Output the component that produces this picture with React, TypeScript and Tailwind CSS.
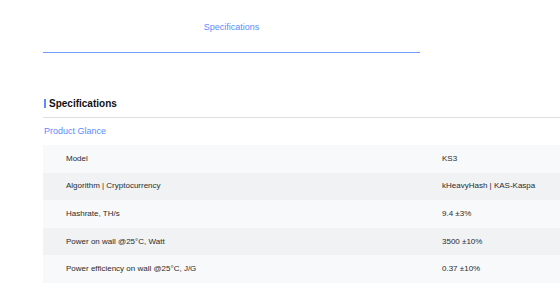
const specs = [
  { label: "Model", value: "KS3" },
  { label: "Algorithm | Cryptocurrency", value: "kHeavyHash | KAS-Kaspa" },
  { label: "Hashrate, TH/s", value: "9.4 ±3%" },
  { label: "Power on wall @25°C, Watt", value: "3500 ±10%" },
  { label: "Power efficiency on wall @25°C, J/G", value: "0.37 ±10%" },
];

export default function App() {
  return (
    <div className="w-[560px] h-[300px] overflow-hidden bg-white font-['Liberation_Sans',Arial,sans-serif]">
      {/* Tab bar */}
      <div className="ml-[43px] w-[377px] h-[53px] border-b border-[#6f9cff] flex justify-center pt-[20px]">
        <span className="text-[9px] leading-[14px] text-[#5b8cff]">Specifications</span>
      </div>

      {/* Section heading */}
      <div className="ml-[43px] mt-[43px] border-b border-[#dedede] pb-[7px]">
        <div className="flex items-center h-[14px]">
          <span className="w-[1.5px] h-[9px] bg-[#5b8cff] ml-px mr-[3.5px]" />
          <h2 className="text-[10px] font-bold text-[#111]">Specifications</h2>
        </div>
      </div>

      <div className="ml-[44px] mt-[7px] text-[9px] leading-[12px] text-[#5b8cff]">Product Glance</div>

      {/* Table */}
      <div className="ml-[43px] mt-[8px]">
        {specs.map((row, i) => (
          <div
            key={row.label}
            className={`flex items-center h-[27.6px] text-[8px] text-[#2b2b2b] ${
              i % 2 === 0 ? "bg-[#f8f9fa]" : "bg-[#f1f2f4]"
            }`}
          >
            <span className="w-[399px] pl-[23px]">{row.label}</span>
            <span>{row.value}</span>
          </div>
        ))}
      </div>
    </div>
  );
}
